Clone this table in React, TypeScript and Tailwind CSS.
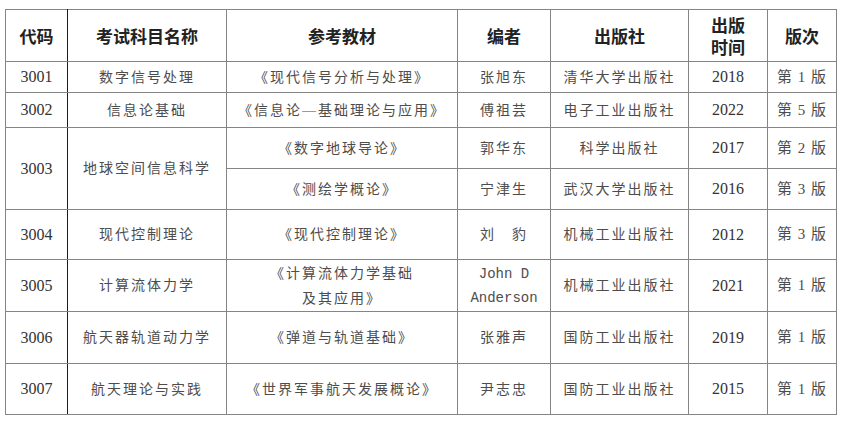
const cell = "border border-[#858585] text-center align-middle p-0";
const first = "border border-[#858585] border-r-[#1c1c1c] text-center align-middle p-0";
const cjk = "text-[14px] tracking-[2px] text-[#4d4d4d]";
const num = "text-[16px] text-[#333]";

type Row = {
  code: string;
  subject: string;
  book: React.ReactNode;
  author: React.ReactNode;
  press: string;
  year: string;
  ed: string;
  h: string;
};

const rows: Row[] = [
  { code: "3001", subject: "数字信号处理", book: "《现代信号分析与处理》", author: "张旭东", press: "清华大学出版社", year: "2018", ed: "第 1 版", h: "h-[31px]" },
  { code: "3002", subject: "信息论基础", book: "《信息论—基础理论与应用》", author: "傅祖芸", press: "电子工业出版社", year: "2022", ed: "第 5 版", h: "h-[35px]" },
];

const rest: Row[] = [
  { code: "3004", subject: "现代控制理论", book: "《现代控制理论》", author: "刘　豹", press: "机械工业出版社", year: "2012", ed: "第 3 版", h: "h-[50px]" },
  {
    code: "3005",
    subject: "计算流体力学",
    book: (
      <span className="block leading-[25px]">
        《计算流体力学基础
        <br />
        及其应用》
      </span>
    ),
    author: (
      <span className="block font-['Liberation_Mono',monospace] text-[14px] leading-[24px] tracking-normal text-[#4d4d4d]">
        John D
        <br />
        Anderson
      </span>
    ),
    press: "机械工业出版社",
    year: "2021",
    ed: "第 1 版",
    h: "h-[52px]",
  },
  { code: "3006", subject: "航天器轨道动力学", book: "《弹道与轨道基础》", author: "张雅声", press: "国防工业出版社", year: "2019", ed: "第 1 版", h: "h-[52px]" },
  { code: "3007", subject: "航天理论与实践", book: "《世界军事航天发展概论》", author: "尹志忠", press: "国防工业出版社", year: "2015", ed: "第 1 版", h: "h-[51px]" },
];

function DataRow({ r }: { r: Row }) {
  return (
    <tr className={r.h}>
      <td className={`${first} ${num}`}>{r.code}</td>
      <td className={`${cell} ${cjk}`}>{r.subject}</td>
      <td className={`${cell} ${cjk}`}>{r.book}</td>
      <td className={`${cell} ${cjk}`}>{r.author}</td>
      <td className={`${cell} ${cjk}`}>{r.press}</td>
      <td className={`${cell} ${num}`}>{r.year}</td>
      <td className={`${cell} text-[15px] tracking-[1px] text-[#4d4d4d]`}>{r.ed}</td>
    </tr>
  );
}

export default function App() {
  return (
    <div className="w-[842px] h-[422px] bg-white pl-[5px] pt-[9px] font-['Liberation_Serif','Noto_Sans_CJK_SC',serif]">
      <table className="border-collapse table-fixed w-[831px]">
        <colgroup>
          <col className="w-[62px]" />
          <col className="w-[159px]" />
          <col className="w-[231px]" />
          <col className="w-[93px]" />
          <col className="w-[138px]" />
          <col className="w-[79px]" />
          <col className="w-[69px]" />
        </colgroup>
        <thead>
          <tr className="h-[52px] font-['Noto_Sans_CJK_SC',sans-serif] font-bold text-[17px] text-[#222]">
            <th className={first}>代码</th>
            <th className={cell}>考试科目名称</th>
            <th className={cell}>参考教材</th>
            <th className={cell}>编者</th>
            <th className={cell}>出版社</th>
            <th className={`${cell} leading-[22px]`}>
              出版
              <br />
              时间
            </th>
            <th className={cell}>版次</th>
          </tr>
        </thead>
        <tbody>
          {rows.map((r) => (
            <DataRow key={r.code} r={r} />
          ))}
          <tr className="h-[41px]">
            <td rowSpan={2} className={`${first} ${num}`}>3003</td>
            <td rowSpan={2} className={`${cell} ${cjk}`}>地球空间信息科学</td>
            <td className={`${cell} ${cjk}`}>《数字地球导论》</td>
            <td className={`${cell} ${cjk}`}>郭华东</td>
            <td className={`${cell} ${cjk}`}>科学出版社</td>
            <td className={`${cell} ${num}`}>2017</td>
            <td className={`${cell} text-[15px] tracking-[1px] text-[#4d4d4d]`}>第 2 版</td>
          </tr>
          <tr className="h-[41px]">
            <td className={`${cell} ${cjk}`}>《测绘学概论》</td>
            <td className={`${cell} ${cjk}`}>宁津生</td>
            <td className={`${cell} ${cjk}`}>武汉大学出版社</td>
            <td className={`${cell} ${num}`}>2016</td>
            <td className={`${cell} text-[15px] tracking-[1px] text-[#4d4d4d]`}>第 3 版</td>
          </tr>
          {rest.map((r) => (
            <DataRow key={r.code} r={r} />
          ))}
        </tbody>
      </table>
    </div>
  );
}
